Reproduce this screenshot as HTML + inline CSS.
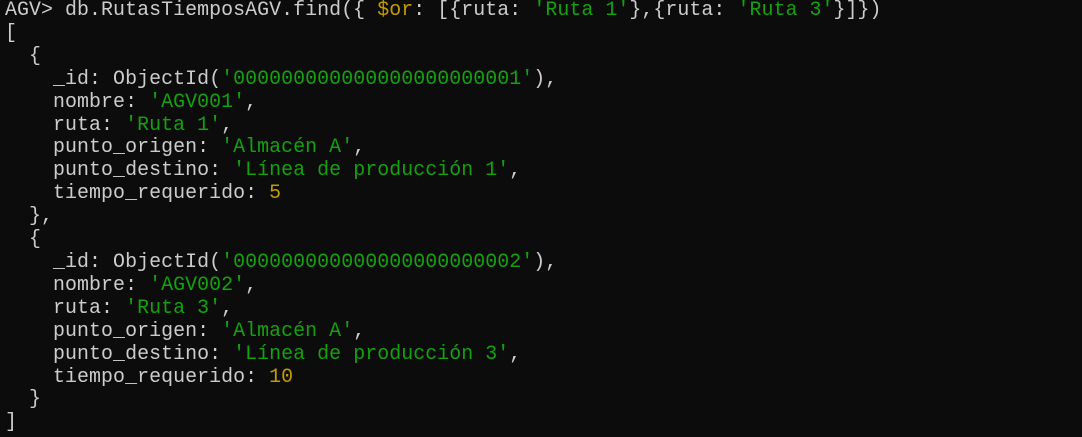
<!DOCTYPE html>
<html><head><meta charset="utf-8"><style>
html,body{margin:0;padding:0;background:#0c0c0c;width:1082px;height:437px;overflow:hidden}
pre{margin:0;position:absolute;left:5px;top:-1px;font-family:"Liberation Mono",monospace;font-size:19.9px;letter-spacing:0.07px;line-height:22.9px;color:#cccccc;white-space:pre}
.g{color:#13a10e}.y{color:#c19c00}
</style></head><body><pre>AGV&gt; db.RutasTiemposAGV.find({ <span class="y">$or</span>: [{ruta: <span class="g">'Ruta 1'</span>},{ruta: <span class="g">'Ruta 3'</span>}]})
[
  {
    _id: ObjectId(<span class="g">'000000000000000000000001'</span>),
    nombre: <span class="g">'AGV001'</span>,
    ruta: <span class="g">'Ruta 1'</span>,
    punto_origen: <span class="g">'Almacén A'</span>,
    punto_destino: <span class="g">'Línea de producción 1'</span>,
    tiempo_requerido: <span class="y">5</span>
  },
  {
    _id: ObjectId(<span class="g">'000000000000000000000002'</span>),
    nombre: <span class="g">'AGV002'</span>,
    ruta: <span class="g">'Ruta 3'</span>,
    punto_origen: <span class="g">'Almacén A'</span>,
    punto_destino: <span class="g">'Línea de producción 3'</span>,
    tiempo_requerido: <span class="y">10</span>
  }
]</pre></body></html>
